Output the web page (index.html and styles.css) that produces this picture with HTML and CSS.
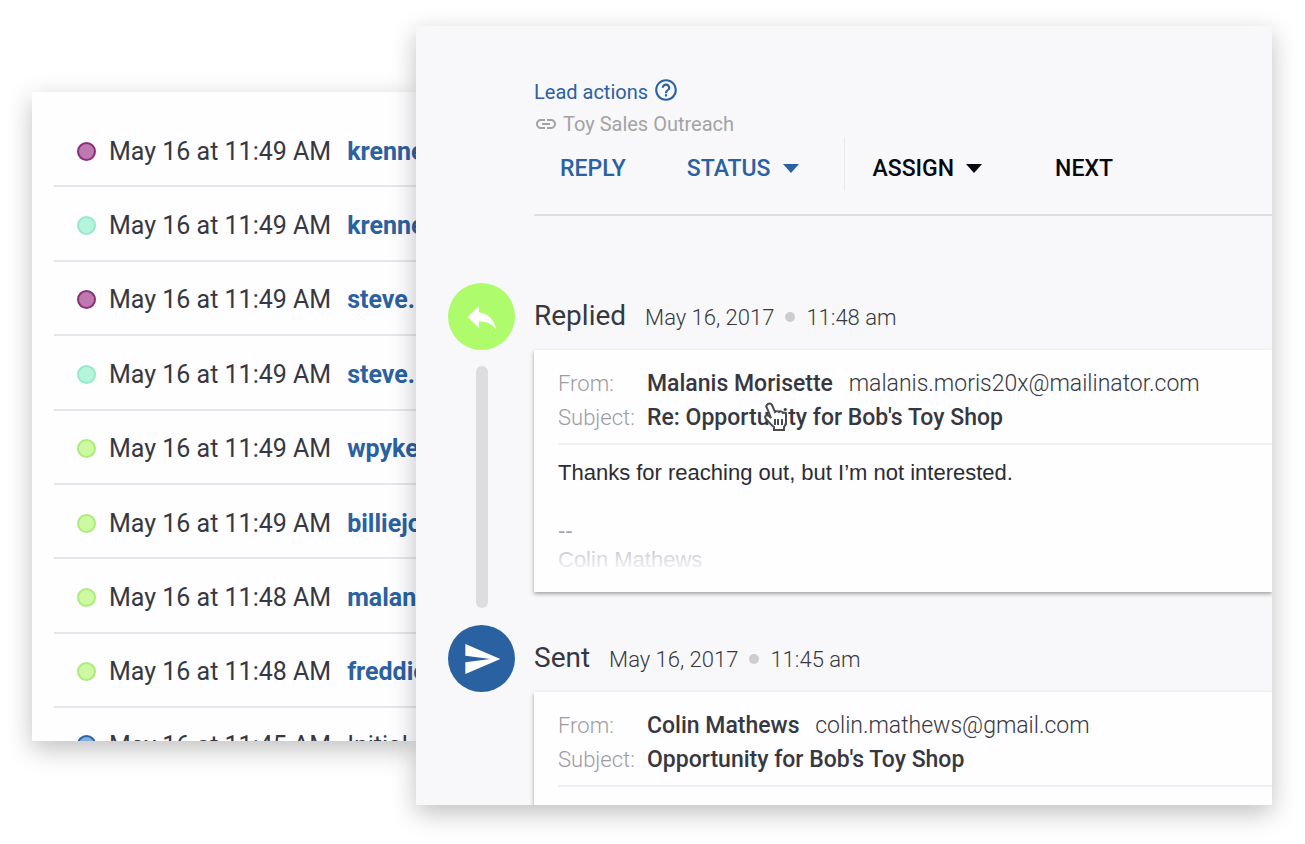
FILE: index.html
```html
<!DOCTYPE html>
<html lang="en">
<head>
    <meta charset="UTF-8">
    <title>Leads</title>
    <link rel="stylesheet" href="styles.css">
</head>
<body>
    <ul class="leads">
        <li><i class="dot purple"></i><span>May 16 at 11:49 AM</span><a href="#">krenne</a></li>
        <li><i class="dot teal"></i><span>May 16 at 11:49 AM</span><a href="#">krenne</a></li>
        <li><i class="dot purple"></i><span>May 16 at 11:49 AM</span><a href="#">steve.</a></li>
        <li><i class="dot teal"></i><span>May 16 at 11:49 AM</span><a href="#">steve.</a></li>
        <li><i class="dot green"></i><span>May 16 at 11:49 AM</span><a href="#">wpyke</a></li>
        <li><i class="dot green"></i><span>May 16 at 11:49 AM</span><a href="#">billiejo</a></li>
        <li><i class="dot green"></i><span>May 16 at 11:48 AM</span><a href="#">malan</a></li>
        <li><i class="dot green"></i><span>May 16 at 11:48 AM</span><a href="#">freddie</a></li>
        <li class="cut"><i class="dot blue"></i><span>May 16 at 11:45 AM</span><span>Initial</span></li>
    </ul>

    <main class="detail">
        <header class="lead-header">
            <a class="lead-actions" href="#">Lead actions
                <svg width="26" height="26" viewBox="0 0 24 24"><path d="M11 18h2v-2h-2v2zm1-16C6.480 2 2 6.480 2 12s4.480 10 10 10 10-4.480 10-10S17.520 2 12 2zm0 18c-4.410 0-8-3.590-8-8s3.590-8 8-8 8 3.590 8 8-3.590 8-8 8zm0-14c-2.210 0-4 1.790-4 4h2c0-1.100.9-2 2-2s2 .9 2 2c0 2-3 1.750-3 5h2c0-2.250 3-2.500 3-5 0-2.210-1.790-4-4-4z"/></svg>
            </a>
            <div class="campaign">
                <svg width="24" height="24" viewBox="0 0 24 24"><path d="M3.900 12c0-1.710 1.390-3.100 3.100-3.100h4V7H7c-2.760 0-5 2.240-5 5s2.240 5 5 5h4v-1.900H7c-1.710 0-3.100-1.390-3.100-3.100zM8 13h8v-2H8v2zm9-6h-4v1.900h4c1.710 0 3.100 1.390 3.100 3.100s-1.390 3.100-3.100 3.100h-4V17h4c2.760 0 5-2.240 5-5s-2.240-5-5-5z"/></svg>
                Toy Sales Outreach
            </div>
            <div class="toolbar">
                <button type="button">REPLY</button>
                <button type="button" class="status">STATUS <i class="caret"></i></button>
                <button type="button" class="assign">ASSIGN <i class="caret"></i></button>
                <button type="button" class="next">NEXT</button>
            </div>
        </header>

        <section class="event">
            <div class="rail">
                <div class="badge replied">
                    <svg width="38" height="38" viewBox="0 0 24 24"><path d="M10 9V5l-7 7 7 7v-4.100c5 0 8.500 1.600 11 5.100-1-5-4-10-11-11z"/></svg>
                </div>
                <div class="bar"></div>
            </div>
            <div class="content">
                <div class="title"><h2>Replied</h2><span>May 16, 2017</span><i></i><span>11:48 am</span></div>
                <article class="card">
                    <dl>
                        <dt>From:</dt>
                        <dd>Malanis Morisette <span class="email">malanis.moris20x@mailinator.com</span></dd>
                        <dt>Subject:</dt>
                        <dd class="subject">Re: Opportunity for Bob's Toy Shop
                            <svg class="pointer" width="24" height="30" viewBox="0 0 24 30"><path d="M3 3c1-2 4-2 5 0l3 7c1-1 3-1 4 0 1-1 3-1 4 1 2-1 3 0 3 2v7c0 3-1 4-2 5v3H10v-3c-3-2-5-5-8-8-2-2 0-5 3-3l2 2L3 6c-1-1-1-2 0-3z"/><path d="M11 17v6M14 17v6M18 17v6"/></svg>
                        </dd>
                    </dl>
                    <div class="message">
                        <p>Thanks for reaching out, but I’m not interested.</p>
                        <p class="signature">--<br>Colin Mathews</p>
                    </div>
                </article>
            </div>
        </section>

        <section class="event">
            <div class="rail">
                <div class="badge sent">
                    <svg width="40" height="40" viewBox="0 0 24 24"><path d="M2.010 21L23 12 2.010 3 2 10l15 2-15 2z"/></svg>
                </div>
            </div>
            <div class="content">
                <div class="title"><h2>Sent</h2><span>May 16, 2017</span><i></i><span>11:45 am</span></div>
                <article class="card">
                    <dl>
                        <dt>From:</dt>
                        <dd>Colin Mathews <span class="email">colin.mathews@gmail.com</span></dd>
                        <dt>Subject:</dt>
                        <dd class="subject">Opportunity for Bob's Toy Shop</dd>
                    </dl>
                </article>
            </div>
        </section>
    </main>
</body>
</html>
```
FILE: styles.css
```css
* {
    box-sizing: border-box;
}
body {
    display: grid;
    grid-template-columns: 96fr 214fr;
    height: 100vh;
    margin: 0;
    padding: 26px 33px 39px 32px;
    background-color: #fff;
    color: #37383f;
    font-family: Roboto, sans-serif;
    font-size: 23px;
    overflow: hidden;
}
a {
    color: #2a61a1;
    text-decoration: none;
}
svg {
    flex: none;
    fill: currentColor;
}

/* lead list */
.leads {
    display: flex;
    flex-direction: column;
    min-width: 0;
    margin: 66px 0 64px;
    padding: 21px 0 0 22px;
    list-style: none;
    background-color: #fefdff;
    box-shadow: 0 8px 24px rgba(0, 0, 0, 0.25);
    font-size: 25px;
    white-space: nowrap;
    overflow: hidden;
}
.leads li {
    display: flex;
    flex: 1;
    align-items: center;
    padding: 4px 0 0 23px;
    border-bottom: 2px solid #e5e6ea;
    overflow: hidden;
}
.leads li.cut {
    flex: 0 0 33px;
    align-items: flex-start;
    padding-top: 23px;
    border-bottom: 0;
}
.leads span {
    margin-right: 16px;
}
.leads a {
    font-weight: 700;
}
.dot {
    flex: none;
    width: 19px;
    height: 19px;
    margin-right: 13px;
    border: 2px solid;
    border-radius: 50%;
}
.cut .dot {
    margin-top: 4px;
}
.purple { background-color: #bd79b0; border-color: #8a2f78; }
.teal { background-color: #b4f5dc; border-color: #98e8cb; }
.green { background-color: #ccf9a2; border-color: #adec78; }
.blue { background-color: #86aede; border-color: #2a61a1; }

/* lead detail */
.detail {
    position: relative;
    min-width: 0;
    background-color: #f8f8fa;
    box-shadow: 0 8px 24px rgba(0, 0, 0, 0.25);
    white-space: nowrap;
    overflow: hidden;
}
.lead-header {
    margin-left: 118px;
    padding: 51px 0 24px;
    border-bottom: 2px solid #dfdfe1;
    font-size: 20px;
}
.lead-actions {
    display: flex;
    gap: 5px;
    line-height: 31px;
}
.campaign {
    display: flex;
    align-items: center;
    gap: 5px;
    height: 30px;
    padding-top: 2px;
    color: #a3a3a5;
}
.toolbar {
    display: flex;
    align-items: flex-end;
    height: 52px;
    padding-left: 26px;
}
.toolbar button {
    display: flex;
    align-items: center;
    gap: 12px;
    height: 44px;
    padding: 0;
    border: 0;
    background: none;
    color: #2a61a1;
    font-family: inherit;
    font-size: 23px;
    font-weight: 500;
    cursor: pointer;
}
.toolbar .status {
    margin-left: 61px;
}
.toolbar .assign {
    height: 52px;
    margin-left: 45px;
    padding: 8px 0 0 28px;
    border-left: 1px solid #e9e9ec;
    color: #08080f;
}
.toolbar .next {
    margin-left: 73px;
    color: #08080f;
}
.caret {
    border: 8px solid transparent;
    border-top: 9px solid;
    border-bottom: 0;
}

/* timeline */
.event {
    display: flex;
    gap: 19px;
    padding-left: 32px;
}
.lead-header + .event {
    margin-top: 67px;
}
.rail {
    display: flex;
    flex-direction: column;
    align-items: center;
    gap: 16px;
    width: 67px;
    padding-bottom: 17px;
}
.badge {
    display: flex;
    align-items: center;
    justify-content: center;
    width: 67px;
    height: 67px;
    border-radius: 50%;
    color: #fff;
}
.replied {
    background-color: #aefb6b;
}
.sent {
    background-color: #2a61a1;
}
.bar {
    flex: 1;
    width: 12px;
    border-radius: 6px;
    background-color: #dddddf;
}
.content {
    flex: 1;
    min-width: 0;
    padding-bottom: 33px;
}
.title {
    display: flex;
    align-items: baseline;
    height: 67px;
    line-height: 66px;
}
.title h2 {
    margin: 0 19px 0 0;
    font-size: 28px;
    font-weight: 400;
}
.title span {
    font-size: 22px;
    font-weight: 300;
}
.title i {
    align-self: center;
    width: 10px;
    height: 10px;
    margin: 0 11px;
    border-radius: 50%;
    background-color: #cdcdcf;
}
.card {
    padding: 17px 0 18px 24px;
    background-color: #fefdff;
    box-shadow: 0 2px 4px rgba(0, 0, 0, 0.35);
}
.card dl {
    display: grid;
    grid-template-columns: 89px 1fr;
    margin: 0;
    padding-bottom: 8px;
    border-bottom: 2px solid #f0f0f2;
    line-height: 34px;
}
.card dt {
    color: #9c9c9f;
    font-size: 22px;
    font-weight: 300;
}
.card dd {
    margin: 0;
    font-weight: 500;
}
.card .subject {
    position: relative;
}
.email {
    margin-left: 10px;
    font-weight: 300;
}
.pointer {
    position: absolute;
    left: 117px;
    top: 1px;
    fill: #fff;
    stroke: #4a4a4e;
    stroke-width: 2;
}
.message {
    padding-top: 13px;
    color: #2b2c33;
    font-family: "Liberation Sans", Arial, sans-serif;
    font-size: 22px;
    line-height: 29px;
}
.message p {
    margin: 0 0 29px;
}
.message .signature {
    position: relative;
    margin: 0;
    color: #a3a3a5;
}
.signature::after {
    content: "";
    position: absolute;
    right: 0;
    bottom: 0;
    left: 0;
    height: 42px;
    background: linear-gradient(rgba(254, 253, 255, 0), #fefdff);
}
```
